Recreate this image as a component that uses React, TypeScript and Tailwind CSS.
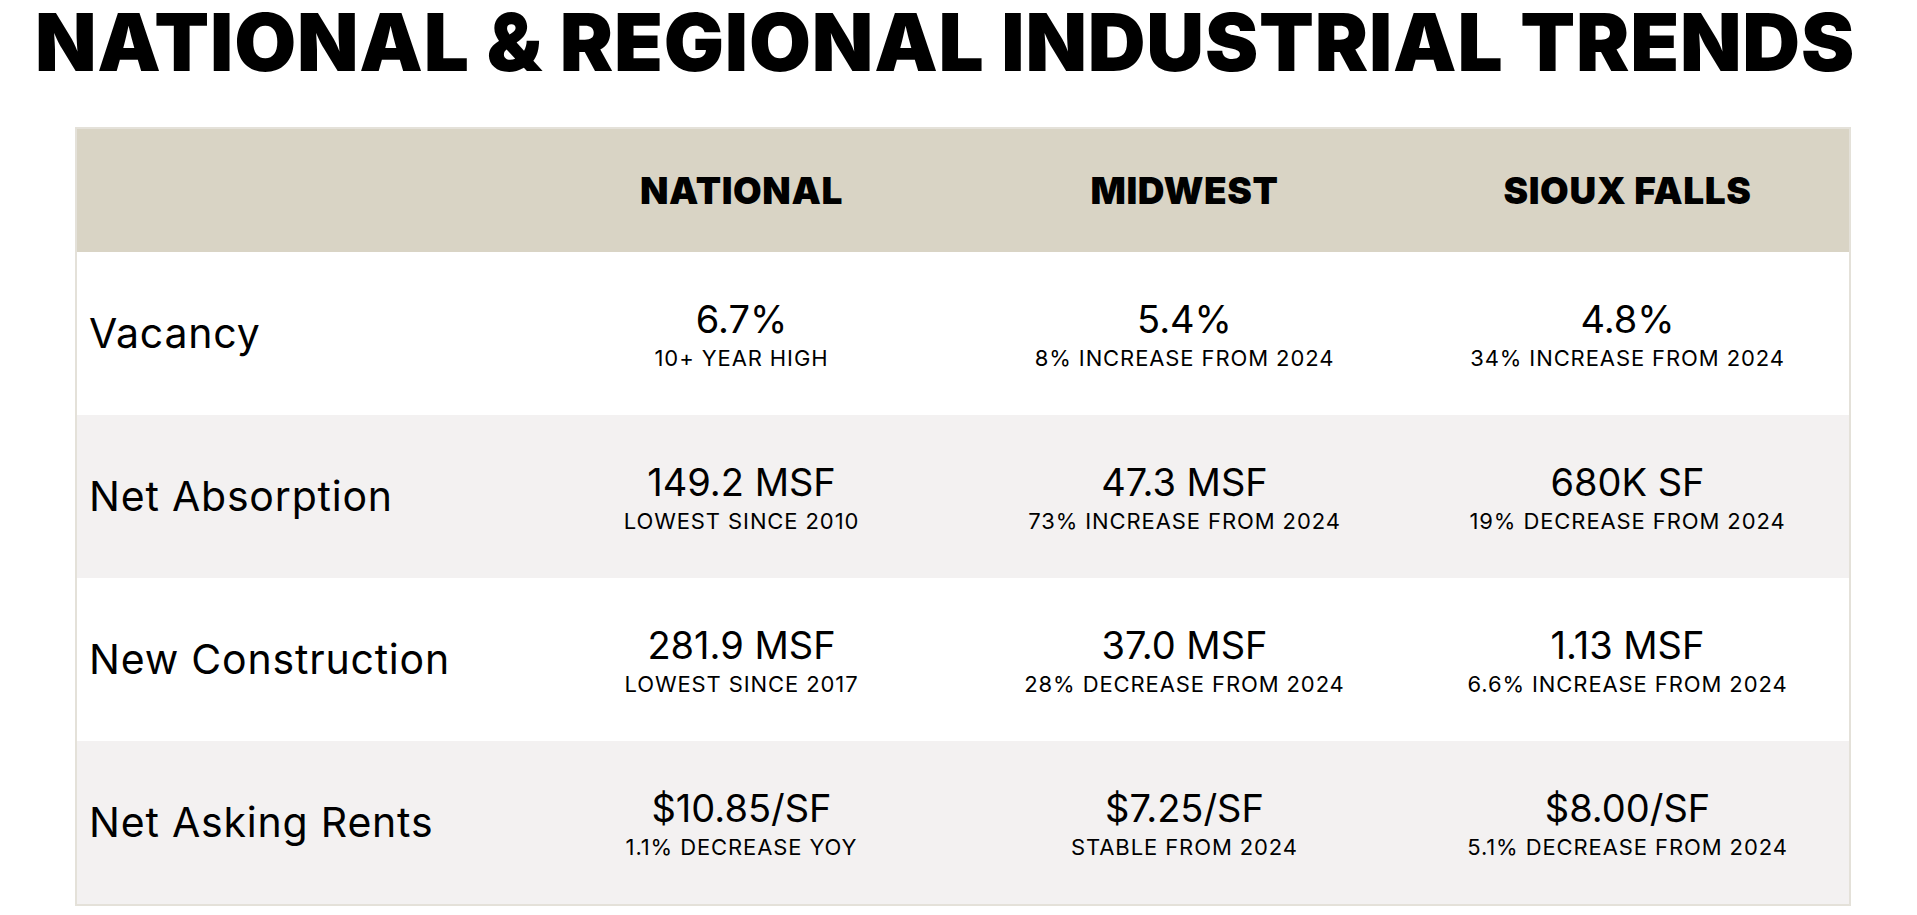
const rows = [
  {
    label: 'Vacancy',
    cells: [
      { value: '6.7%', note: '10+ YEAR HIGH' },
      { value: '5.4%', note: '8% INCREASE FROM 2024' },
      { value: '4.8%', note: '34% INCREASE FROM 2024' },
    ],
  },
  {
    label: 'Net Absorption',
    cells: [
      { value: '149.2 MSF', note: 'LOWEST SINCE 2010' },
      { value: '47.3 MSF', note: '73% INCREASE FROM 2024' },
      { value: '680K SF', note: '19% DECREASE FROM 2024' },
    ],
  },
  {
    label: 'New Construction',
    cells: [
      { value: '281.9 MSF', note: 'LOWEST SINCE 2017' },
      { value: '37.0 MSF', note: '28% DECREASE FROM 2024' },
      { value: '1.13 MSF', note: '6.6% INCREASE FROM 2024' },
    ],
  },
  {
    label: 'Net Asking Rents',
    cells: [
      { value: '$10.85/SF', note: '1.1% DECREASE YOY' },
      { value: '$7.25/SF', note: 'STABLE FROM 2024' },
      { value: '$8.00/SF', note: '5.1% DECREASE FROM 2024' },
    ],
  },
];

const columns = ['NATIONAL', 'MIDWEST', 'SIOUX FALLS'];

export default function App() {
  return (
    <div className="min-h-screen bg-white text-black font-['Inter','Liberation_Sans',sans-serif]">
      <h1 className="pr-[27px] text-center text-[80px] font-black leading-[1.05] tracking-[0.8px] text-black">
        NATIONAL &amp; REGIONAL INDUSTRIAL TRENDS
      </h1>

      <div className="ml-[75px] mt-[43px] w-[1776px] border-2 border-[#e4e1d9]">
        <div className="grid h-[123px] grid-cols-4 items-center bg-[#d9d4c5]">
          <div />
          {columns.map((col) => (
            <div key={col} className="text-center text-[37px] font-black tracking-[0.6px]">
              {col}
            </div>
          ))}
        </div>

        {rows.map((row, i) => (
          <div
            key={row.label}
            className={`grid h-[163px] grid-cols-4 items-center ${i % 2 === 1 ? 'bg-[#f3f1f1]' : 'bg-white'}`}
          >
            <div className="pl-[12px] text-[41px] tracking-[0.8px]">{row.label}</div>
            {row.cells.map((cell) => (
              <div key={cell.value} className="flex flex-col items-center">
                <span className="text-[38px] leading-[46px]">{cell.value}</span>
                <span className="mt-[3px] text-[22px] leading-[26px] tracking-[0.9px]">{cell.note}</span>
              </div>
            ))}
          </div>
        ))}
      </div>
    </div>
  );
}
